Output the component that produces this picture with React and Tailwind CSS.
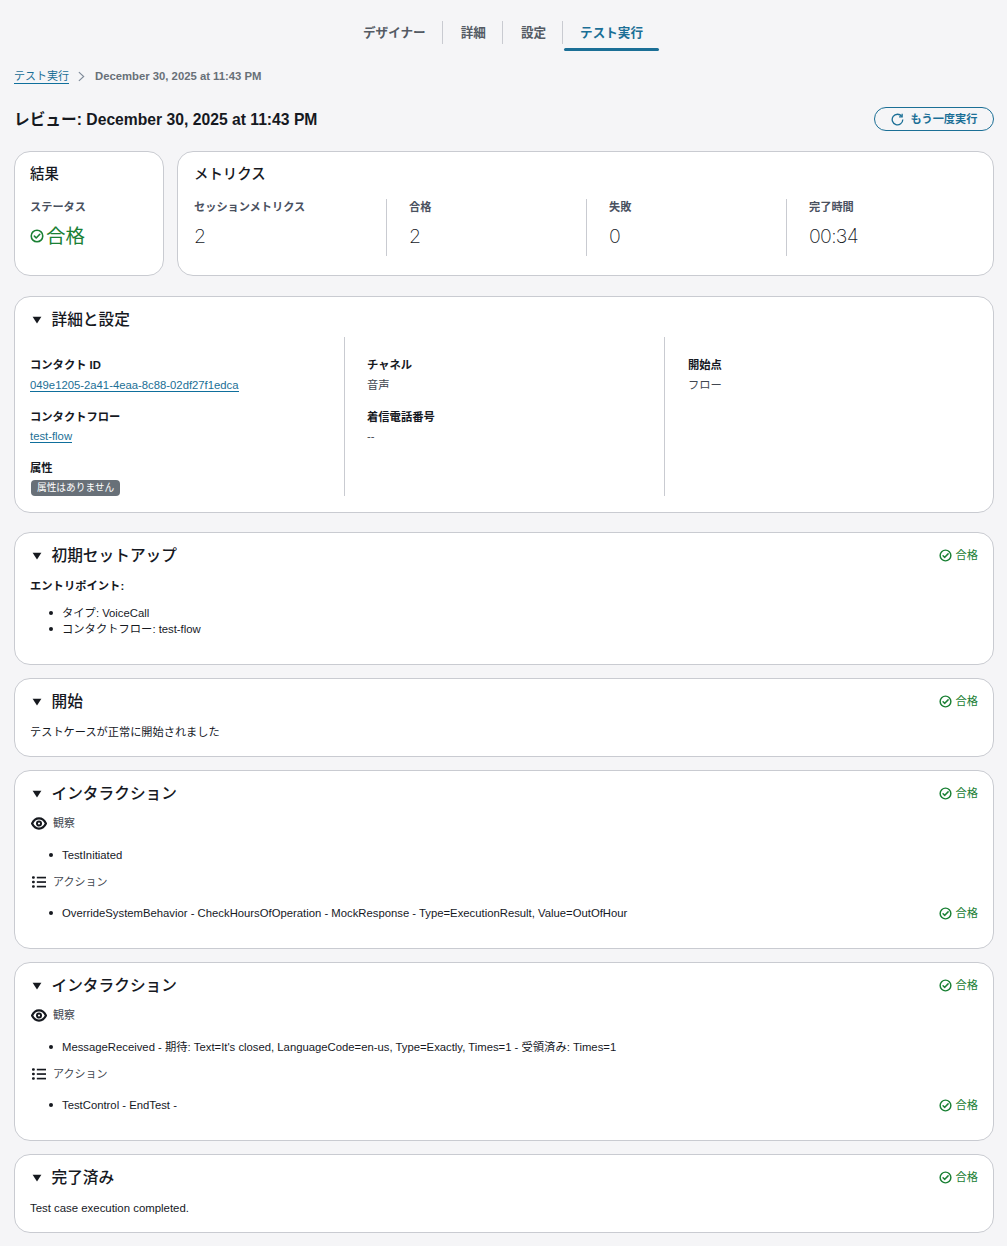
const FONT = "font-['Liberation_Sans','Noto_Sans_CJK_JP',sans-serif]";

function CheckCircle({ className }) {
  return (
    <svg viewBox="0 0 16 16" fill="none" stroke="currentColor" strokeWidth="1.8" className={className}>
      <circle cx="8" cy="8" r="6.6" />
      <path d="M5 8.2l2.1 2.1L11.2 6" strokeLinecap="round" strokeLinejoin="round" />
    </svg>
  );
}

function Caret() {
  return (
    <svg viewBox="0 0 12 10" className="ml-[2px] h-[8px] w-[10px] shrink-0 fill-[#16191f]">
      <path d="M0.5 1h11L6 9.5z" />
    </svg>
  );
}

function Pass({ className = "" }) {
  return (
    <span className={`flex items-center gap-[3px] text-[11.3px] leading-4 text-[#1a8034] ${className}`}>
      <CheckCircle className="h-[13px] w-[13px]" />
      合格
    </span>
  );
}

function Section({ title, pass = true, className = "", children }) {
  return (
    <section className={`rounded-2xl border border-[#c9cbd1] bg-white pr-[15px] pl-[15px] ${className}`}>
      <div className="flex items-start justify-between pt-[12px]">
        <div className="flex items-center gap-[9.5px]">
          <Caret />
          <h2 className="text-[15.7px] leading-[22px] font-medium text-[#16191f]">{title}</h2>
        </div>
        {pass && <Pass className="pt-[2px]" />}
      </div>
      {children}
    </section>
  );
}

function Metric({ label, value, className = "" }) {
  return (
    <div className={`h-[57px] ${className}`}>
      <p className="text-[11.2px] leading-4 font-bold text-[#4a5160]">{label}</p>
      <p className="mt-[9px] font-['Inter',sans-serif] text-[19.5px] leading-6 font-extralight tracking-[-0.7px] text-[#16191f]">{value}</p>
    </div>
  );
}

function Field({ label, gap = "mt-[4px]", className = "", children }) {
  return (
    <div className={className}>
      <p className="text-[11.3px] leading-4 font-bold text-[#16191f]">{label}</p>
      <div className={`${gap} text-[11.3px] leading-4 text-[#414750]`}>{children}</div>
    </div>
  );
}

function Link({ children }) {
  return <a className="border-b border-[#0f6f9c] text-[#1b6f96]">{children}</a>;
}

function Eye() {
  return (
    <svg viewBox="0 0 18 14" className="ml-[1px] h-[15px] w-[16px]" fill="none" stroke="#16191f">
      <path d="M1.200 7C3 3.200 5.800 1.300 9 1.300S15 3.200 16.800 7C15 10.800 12.200 12.700 9 12.700S3 10.800 1.200 7z" strokeWidth="2.500" />
      <circle cx="9" cy="7" r="2.300" strokeWidth="2.200" />
    </svg>
  );
}

function ListIcon() {
  return (
    <svg viewBox="0 0 16 14" className="ml-[2px] h-[14px] w-[14px] fill-[#16191f]">
      <rect x="0" y="0.500" width="3.200" height="2.800" rx="1.200" />
      <rect x="0" y="5.600" width="3.200" height="2.800" rx="1.200" />
      <rect x="0" y="10.800" width="3.200" height="2.800" rx="1.200" />
      <rect x="5.500" y="1" width="10.500" height="1.900" />
      <rect x="5.500" y="6.100" width="10.500" height="1.900" />
      <rect x="5.500" y="11.300" width="10.500" height="1.900" />
    </svg>
  );
}

function Bullet({ children }) {
  return (
    <li className="flex items-center gap-[9px] text-[11.3px] leading-4 text-[#16191f]">
      <span className="h-1 w-1 shrink-0 rounded-full bg-[#16191f]" />
      {children}
    </li>
  );
}

function Interaction({ observed, action }) {
  return (
    <Section title="インタラクション" className="h-[179px]">
      <div className="mt-[10px] flex h-[16px] items-center gap-[6px] text-[11px] text-[#414750]">
        <Eye />
        観察
      </div>
      <ul className="mt-[16px] ml-[19px]">
        <Bullet>{observed}</Bullet>
      </ul>
      <div className="mt-[11px] flex h-[16px] items-center gap-[7px] text-[11px] text-[#414750]">
        <ListIcon />
        アクション
      </div>
      <div className="mt-[15px] flex items-center justify-between">
        <ul className="ml-[19px]">
          <Bullet>{action}</Bullet>
        </ul>
        <Pass />
      </div>
    </Section>
  );
}

const tabs = ["デザイナー", "詳細", "設定"];

export default function App() {
  return (
    <div className={`${FONT} min-h-[1246px] bg-[#f5f5f7] pr-[13px] pl-[14px] text-[#16191f]`}>
      <nav className="flex h-[51px] items-start justify-center pr-[3px]">
        <div className="mt-[21px] flex text-[12.6px] leading-[22px] font-bold">
          {tabs.map((t) => (
            <div key={t} className="flex h-[23px] items-center border-r border-[#c9cbd1] pr-[16px] pl-[18px] text-[#545b64]">
              {t}
            </div>
          ))}
          <div className="relative flex h-[23px] items-center pr-[17px] pl-[17px] text-[#1b6f96]">
            テスト実行
            <span className="absolute -bottom-[7px] left-[1px] h-[3px] w-[95px] rounded-sm bg-[#1b6f96]" />
          </div>
        </div>
      </nav>

      <div className="mt-[17px] flex h-4 items-center text-[11px] leading-4">
        <a className="border-b border-[#0f6f9c] leading-[14px] text-[#1b6f96]">テスト実行</a>
        <svg viewBox="0 0 8 12" fill="none" stroke="#7d8998" strokeWidth="1.300" className="mr-[10px] ml-[9px] h-[11px] w-[7px]">
          <path d="M1 1l5.500 5L1 11" />
        </svg>
        <span className="text-[11.3px] font-bold text-[#687078]">December 30, 2025 at 11:43 PM</span>
      </div>

      <div className="mt-[23px] flex h-[24px] items-center justify-between">
        <h1 className="pt-[2px] text-[15.7px] leading-6 font-bold">レビュー: December 30, 2025 at 11:43 PM</h1>
        <button className="flex h-6 w-[120px] items-center justify-center gap-[7px] rounded-full border border-[#1b6f96] text-[11.2px] font-bold text-[#1b6f96]">
          <svg viewBox="0 0 14 14" fill="none" stroke="currentColor" strokeWidth="1.400" className="h-[13px] w-[13px]">
            <path d="M11.600 3.700A5.700 5.700 0 1 0 12.700 7" />
            <path d="M12 0.800v3.300H8.700" />
          </svg>
          もう一度実行
        </button>
      </div>

      <div className="mt-[20px] flex h-[125px] gap-[13px]">
        <section className="w-[150px] shrink-0 rounded-2xl border border-[#c9cbd1] bg-white px-[15px] pt-[12px]">
          <h2 className="text-[14.4px] leading-5 font-medium">結果</h2>
          <p className="mt-[15px] text-[11.2px] leading-4 font-bold text-[#4a5160]">ステータス</p>
          <p className="mt-[9px] flex items-center gap-[2px] text-[19.5px] leading-6 text-[#1a8034]">
            <CheckCircle className="h-[14px] w-[14px]" />
            合格
          </p>
        </section>
        <section className="flex-1 rounded-2xl border border-[#c9cbd1] bg-white pt-[12px] pl-[16px]">
          <h2 className="text-[14.4px] leading-5 font-medium">メトリクス</h2>
          <div className="mt-[15px] flex">
            <Metric label="セッションメトリクス" value="2" className="w-[193px] border-r border-[#c9cbd1]" />
            <Metric label="合格" value="2" className="w-[200px] border-r border-[#c9cbd1] pl-[22px]" />
            <Metric label="失敗" value="0" className="w-[200px] border-r border-[#c9cbd1] pl-[22px]" />
            <Metric label="完了時間" value="00:34" className="pl-[22px]" />
          </div>
        </section>
      </div>

      <Section title="詳細と設定" pass={false} className="mt-[20px] h-[217px]">
        <div className="mt-[6px] grid h-[159px] grid-cols-[315px_320px_1fr]">
          <div className="border-r border-[#c9cbd1] pt-[20px]">
            <Field label="コンタクト ID"><Link>049e1205-2a41-4eaa-8c88-02df27f1edca</Link></Field>
            <Field label="コンタクトフロー" gap="mt-[3px]" className="mt-[16px]"><Link>test-flow</Link></Field>
            <Field label="属性" className="mt-[16px]">
              <span className="ml-[1px] block w-fit rounded-[4px] bg-[#687078] px-[6px] text-[9.7px] leading-4 text-white">属性はありません</span>
            </Field>
          </div>
          <div className="border-r border-[#c9cbd1] pt-[20px] pl-[22px]">
            <Field label="チャネル">音声</Field>
            <Field label="着信電話番号" gap="mt-[3px]" className="mt-[16px]">--</Field>
          </div>
          <div className="pt-[20px] pl-[23px]">
            <Field label="開始点">フロー</Field>
          </div>
        </div>
      </Section>

      <Section title="初期セットアップ" className="mt-[19px] h-[133px]">
        <p className="mt-[11px] text-[11.3px] leading-4 font-bold">エントリポイント:</p>
        <ul className="mt-[11px] ml-[19px]">
          <Bullet>タイプ: VoiceCall</Bullet>
          <Bullet>コンタクトフロー: test-flow</Bullet>
        </ul>
      </Section>

      <Section title="開始" className="mt-[13px] h-[79px]">
        <p className="mt-[11px] text-[11.2px] leading-4">テストケースが正常に開始されました</p>
      </Section>

      <div className="mt-[13px] flex flex-col gap-[13px]">
        <Interaction
          observed="TestInitiated"
          action="OverrideSystemBehavior - CheckHoursOfOperation - MockResponse - Type=ExecutionResult, Value=OutOfHour"
        />
        <Interaction
          observed="MessageReceived - 期待: Text=It's closed, LanguageCode=en-us, Type=Exactly, Times=1 - 受領済み: Times=1"
          action="TestControl - EndTest -"
        />
      </div>

      <Section title="完了済み" className="mt-[13px] h-[79px]">
        <p className="mt-[11px] text-[11.4px] leading-4">Test case execution completed.</p>
      </Section>
    </div>
  );
}
